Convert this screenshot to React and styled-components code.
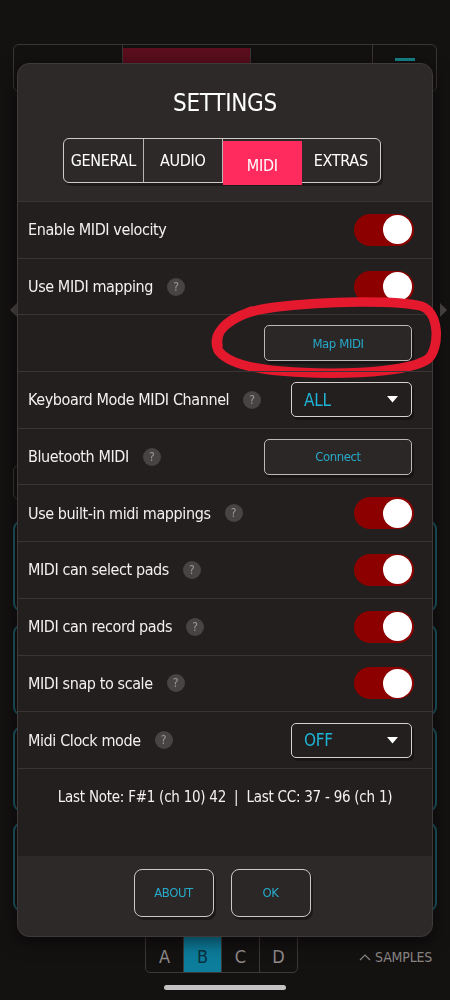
import React from "react";
import styled, { createGlobalStyle } from "styled-components";

const GlobalStyle = createGlobalStyle`
  * { box-sizing: border-box; }
  html, body {
    margin: 0;
    padding: 0;
    background: #141111;
  }
  body {
    font-family: "DejaVu Sans Condensed", "DejaVu Sans", sans-serif;
    font-stretch: condensed;
    color: #f2efef;
  }
`;

/* ---------- background app (mostly behind the dialog) ---------- */

const Page = styled.div`
  width: 450px;
  height: 1000px;
  padding: 0 13px;
  display: flex;
  flex-direction: column;
  overflow: hidden;
`;

const TopBar = styled.div`
  margin-top: 44px;
  height: 48px;
  display: flex;
  border: 1px solid #3b3636;
  border-radius: 6px;
`;

const TopSeg = styled.div`
  width: ${p => p.w}px;
  flex: ${p => (p.grow ? 1 : "none")};
  border-right: ${p => (p.last ? "none" : "1px solid #3b3636")};
  background: ${p => (p.active ? "#5c0e1e" : "transparent")};
  margin-top: ${p => (p.active ? 3 : 0)}px;
  display: flex;
  justify-content: center;
  padding-top: 13px;
`;

const TealDash = styled.div`
  width: 20px;
  height: 3px;
  background: #16898f;
`;

const Nav = styled.div`
  margin-top: 211px;
  margin-left: -3px;
  margin-right: -10px;
  display: flex;
  justify-content: space-between;
`;

const Chevron = styled.div`
  width: 0;
  height: 0;
  border-top: 7px solid transparent;
  border-bottom: 7px solid transparent;
  ${p =>
    p.right
      ? "border-left: 7px solid #4a4545;"
      : "border-right: 7px solid #4a4545;"}
`;

const SmallBox = styled.div`
  margin-top: 148px;
  height: 35px;
  width: 120px;
  border: 1px solid #3e3939;
  border-radius: 6px;
`;

const PadCard = styled.div`
  margin-top: ${p => p.gap}px;
  height: ${p => p.h}px;
  border: 2px solid #1c5a66;
  border-radius: 9px;
`;

const BottomRow = styled.div`
  margin-top: auto;
  height: 48px;
  display: flex;
  align-items: flex-end;
`;

const Bank = styled.div`
  margin-left: 132px;
  width: 153px;
  height: 48px;
  display: flex;
  border: 1px solid #3e3939;
  border-radius: 5px;
  overflow: hidden;
`;

const BankKey = styled.div`
  flex: 1;
  display: flex;
  align-items: flex-end;
  justify-content: center;
  padding-bottom: 5px;
  font-size: 18px;
  color: ${p => (p.active ? "#08303d" : "#8f8b8b")};
  background: ${p => (p.active ? "#0d7d9c" : "transparent")};
  border-right: ${p => (p.last ? "none" : "1px solid #3e3939")};
`;

const Samples = styled.div`
  margin-left: auto;
  margin-right: 5px;
  padding-bottom: 8px;
  display: flex;
  align-items: center;
  gap: 4px;
  font-size: 14px;
  letter-spacing: -0.2px;
  color: #8a8686;
`;

const HomeBar = styled.div`
  width: 122px;
  height: 5px;
  border-radius: 3px;
  background: #c4c2c2;
  margin: 12px auto 10px;
`;

/* ---------- settings dialog ---------- */

const Overlay = styled.div`
  position: fixed;
  inset: 0;
  padding: 63px 17px;
`;

const Dialog = styled.div`
  width: 416px;
  height: 874px;
  display: flex;
  flex-direction: column;
  background: #2e2929;
  border: 1px solid #3f3939;
  border-radius: 12px;
  box-shadow: 0 4px 18px rgba(0, 0, 0, 0.6);
`;

const Header = styled.div`
  height: 137px;
  padding-top: 24px;
  display: flex;
  flex-direction: column;
`;

const Title = styled.h1`
  margin: 0;
  font-size: 24px;
  line-height: 30px;
  font-weight: 400;
  text-align: center;
  letter-spacing: -0.3px;
  color: #ffffff;
`;

const Tabs = styled.div`
  margin: 20px 0 0 45px;
  width: 318px;
  height: 45px;
  display: flex;
  border: 1px solid #cfcaca;
  border-radius: 6px;
  box-shadow: 2px 3px 0 rgba(0, 0, 0, 0.35);
`;

const Tab = styled.div`
  flex: 1;
  display: flex;
  align-items: center;
  justify-content: center;
  font-size: 16px;
  letter-spacing: -0.3px;
  color: #fff;
  border-right: ${p => (p.last ? "none" : "1px solid #b9b4b4")};
  ${p =>
    p.active &&
    `
    background: #ff2b5e;
    margin-top: 2px;
    margin-bottom: -3px;
    padding-top: 4px;
    border-right: none;
  `}
`;

const List = styled.div`
  background: #231f1f;
  border-bottom: 1px solid #3a3434;
  display: flex;
  flex-direction: column;
`;

const Row = styled.div`
  position: relative;
  height: 56.7px;
  border-top: 1px solid #3a3434;
  display: flex;
  align-items: center;
  padding: 0 18px 0 10px;
`;

const Label = styled.span`
  font-size: 16px;
  letter-spacing: -0.4px;
  color: #f3f0f0;
`;

const Help = styled.span`
  margin-left: 14px;
  width: 18px;
  height: 18px;
  border-radius: 50%;
  background: #484444;
  color: #9d9999;
  font-size: 12px;
  display: flex;
  align-items: center;
  justify-content: center;
`;

const Toggle = styled.div`
  margin-left: auto;
  width: 60px;
  height: 32px;
  border-radius: 16px;
  background: #8c0000;
  display: flex;
  align-items: center;
  justify-content: flex-end;
  padding-right: 2px;
`;

const Knob = styled.div`
  width: 29px;
  height: 29px;
  border-radius: 50%;
  background: #ffffff;
`;

const Button = styled.button`
  margin-left: auto;
  margin-right: 2px;
  width: 148px;
  height: 36px;
  background: #2c2727;
  border: 1px solid #bdb8b8;
  border-radius: 5px;
  box-shadow: 2px 3px 0 rgba(0, 0, 0, 0.35);
  color: #27a9c9;
  font-family: inherit;
  font-stretch: condensed;
  font-size: 13px;
  letter-spacing: -0.4px;
  cursor: pointer;
`;

const FooterButton = styled(Button)`
  margin: 0;
  width: 80px;
  height: 48px;
  border-radius: 8px;
  border-color: #cdc8c8;
`;

const Select = styled.div`
  margin-left: auto;
  margin-right: 2px;
  width: 121px;
  height: 35px;
  border: 1px solid #d6d1d1;
  border-radius: 5px;
  box-shadow: 2px 3px 0 rgba(0, 0, 0, 0.35);
  display: flex;
  align-items: center;
  justify-content: space-between;
  padding: 0 13px 0 12px;
  font-size: 17px;
  letter-spacing: -0.3px;
  color: #1fb3d6;
`;

const Ring = styled.svg`
  position: absolute;
  left: 188px;
  top: -19px;
  width: 240px;
  height: 84px;
  pointer-events: none;
  overflow: visible;
`;

const Info = styled.div`
  height: 87px;
  background: #231f1f;
  padding-top: 19px;
  text-align: center;
  font-size: 15px;
  letter-spacing: -0.25px;
  color: #f3f0f0;
`;

const Footer = styled.div`
  flex: 1;
  display: flex;
  justify-content: center;
  gap: 17px;
  padding: 13px 6px 0 0;
`;

const Caret = () => (
  <svg width="11" height="7" viewBox="0 0 11 7">
    <polygon points="0,0 11,0 5.5,6.5" fill="#ffffff" />
  </svg>
);

const ToggleRow = ({ label, help }) => (
  <Row>
    <Label>{label}</Label>
    {help && <Help>?</Help>}
    <Toggle>
      <Knob />
    </Toggle>
  </Row>
);

export default function App() {
  return (
    <>
      <GlobalStyle />
      <Page>
        <TopBar>
          <TopSeg w={109} />
          <TopSeg w={128} active />
          <TopSeg w={122} />
          <TopSeg grow last>
            <TealDash />
          </TopSeg>
        </TopBar>
        <Nav>
          <Chevron />
          <Chevron right />
        </Nav>
        <SmallBox />
        <PadCard gap={20} h={92} />
        <PadCard gap={12} h={92} />
        <PadCard gap={10} h={86} />
        <PadCard gap={10} h={90} />

        <BottomRow>
          <Bank>
            <BankKey>A</BankKey>
            <BankKey active>B</BankKey>
            <BankKey>C</BankKey>
            <BankKey last>D</BankKey>
          </Bank>
          <Samples>
            <svg width="12" height="8" viewBox="0 0 12 8">
              <polyline points="1,7 6,2 11,7" fill="none" stroke="#8a8686" strokeWidth="1.2" />
            </svg>
            SAMPLES
          </Samples>
        </BottomRow>
        <HomeBar />
      </Page>

      <Overlay>
        <Dialog>
          <Header>
            <Title>SETTINGS</Title>
            <Tabs>
              <Tab>GENERAL</Tab>
              <Tab>AUDIO</Tab>
              <Tab active>MIDI</Tab>
              <Tab last>EXTRAS</Tab>
            </Tabs>
          </Header>

          <List>
            <ToggleRow label="Enable MIDI velocity" />
            <ToggleRow label="Use MIDI mapping" help />
            <Row>
              <Button>Map MIDI</Button>
              <Ring viewBox="0 0 240 84">
                <path
                  d="M 12 50 C 8 30, 30 16, 70 11 C 120 5, 190 4, 215 10 C 234 16, 234 52, 222 63 C 206 74, 160 78, 110 77 C 60 76, 22 70, 12 54 C 6 40, 16 26, 46 15"
                  fill="none"
                  stroke="#e4192e"
                  strokeWidth="9.5"
                  strokeLinecap="round"
                />
              </Ring>
            </Row>
            <Row>
              <Label>Keyboard Mode MIDI Channel</Label>
              <Help>?</Help>
              <Select>
                ALL
                <Caret />
              </Select>
            </Row>
            <Row>
              <Label>Bluetooth MIDI</Label>
              <Help>?</Help>
              <Button>Connect</Button>
            </Row>
            <ToggleRow label="Use built-in midi mappings" help />
            <ToggleRow label="MIDI can select pads" help />
            <ToggleRow label="MIDI can record pads" help />
            <ToggleRow label="MIDI snap to scale" help />
            <Row>
              <Label>Midi Clock mode</Label>
              <Help>?</Help>
              <Select>
                OFF
                <Caret />
              </Select>
            </Row>
          </List>

          <Info>Last Note: F#1 (ch 10) 42&nbsp; |&nbsp; Last CC: 37 - 96 (ch 1)</Info>

          <Footer>
            <FooterButton>ABOUT</FooterButton>
            <FooterButton>OK</FooterButton>
          </Footer>
        </Dialog>
      </Overlay>
    </>
  );
}
